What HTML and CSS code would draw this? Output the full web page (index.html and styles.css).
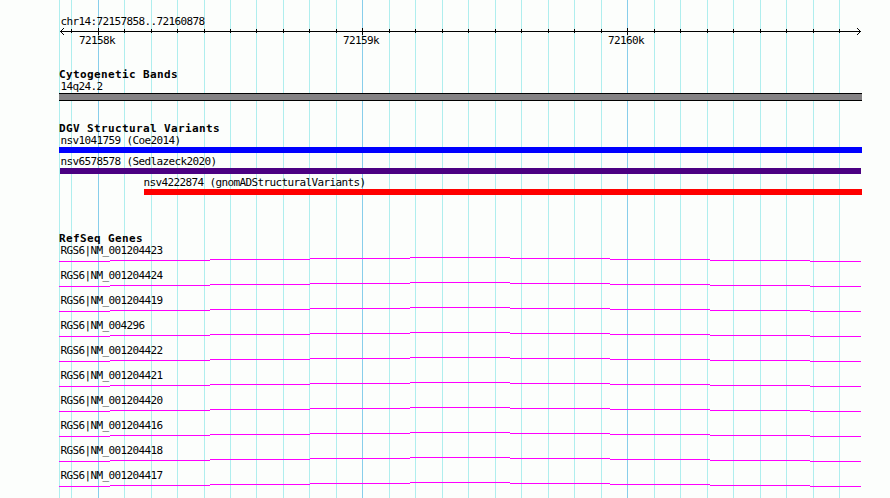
FILE: index.html
```html
<!DOCTYPE html>
<html lang="en">
<head>
    <meta charset="UTF-8">
    <title>chr14:72157858..72160878</title>
    <link rel="stylesheet" href="styles.css">
</head>
<body>
    <div class="browser">
        <svg class="grid" width="890" height="498">
            <path class="minor" d="M59 0v498M71 0v498M124 0v498M151 0v498M177 0v498M204 0v498M230 0v498M256 0v498M283 0v498M309 0v498M336 0v498M389 0v498M415 0v498M442 0v498M468 0v498M495 0v498M521 0v498M548 0v498M574 0v498M601 0v498M654 0v498M680 0v498M707 0v498M733 0v498M760 0v498M786 0v498M813 0v498M839 0v498" transform="translate(.5 0)"/>
            <path class="major" d="M98 0v498M362 0v498M627 0v498" transform="translate(.5 0)"/>
        </svg>

        <div class="tracks">
            <div class="ruler">
                <div class="label">chr14:72157858..72160878</div>
                <svg class="scale" width="803" height="6" viewBox="59 28 803 6">
                    <path d="M60 31.5H861"/>
                    <!-- minor ticks, then major ticks -->
                    <path d="M71 29v4M124 29v4M151 29v4M177 29v4M204 29v4M230 29v4M256 29v4M283 29v4M309 29v4M336 29v4M389 29v4M415 29v4M442 29v4M468 29v4M495 29v4M521 29v4M548 29v4M574 29v4M601 29v4M654 29v4M680 29v4M707 29v4M733 29v4M760 29v4M786 29v4M813 29v4M839 29v4" transform="translate(.5 0)"/>
                    <path d="M98 28v7M362 28v7M627 28v7" transform="translate(.5 0)"/>
                    <!-- arrow heads -->
                    <path d="M61 30.5h1M62 29.5h1M63 28.5h1M61 32.5h1M62 33.5h1M63 34.5h1"/>
                    <path d="M859 30.5h1M858 29.5h1M857 28.5h1M859 32.5h1M858 33.5h1M857 34.5h1"/>
                </svg>
                <div class="ticks">
                    <span>72158k</span>
                    <span>72159k</span>
                    <span>72160k</span>
                </div>
            </div>

            <div class="track">
                <h2>Cytogenetic Bands</h2>
                <div class="label">14q24.2</div>
                <div class="band"></div>
            </div>

            <div class="track variants">
                <h2>DGV Structural Variants</h2>
                <div class="variant">
                    <div class="label">nsv1041759 (Coe2014)</div>
                    <div class="bar blue"></div>
                </div>
                <div class="variant">
                    <div class="label">nsv6578578 (Sedlazeck2020)</div>
                    <div class="bar indigo"></div>
                </div>
                <div class="variant partial">
                    <div class="label">nsv4222874 (gnomADStructuralVariants)</div>
                    <div class="bar red"></div>
                </div>
            </div>

            <div class="track genes">
                <h2>RefSeq Genes</h2>
                <div class="gene">
                    <div class="label">RGS6|NM_001204423</div>
                    <svg class="intron" width="803" height="5">
                        <path id="intron" d="M0 4.5H51M51 3.5H151M151 2.5H251M251 1.5H351M351 .5H451M451 1.5H551M551 2.5H651M651 3.5H751M751 4.5H802"/>
                    </svg>
                </div>
                <div class="gene">
                    <div class="label">RGS6|NM_001204424</div>
                    <svg class="intron" width="803" height="5"><use href="#intron"/></svg>
                </div>
                <div class="gene">
                    <div class="label">RGS6|NM_001204419</div>
                    <svg class="intron" width="803" height="5"><use href="#intron"/></svg>
                </div>
                <div class="gene">
                    <div class="label">RGS6|NM_004296</div>
                    <svg class="intron" width="803" height="5"><use href="#intron"/></svg>
                </div>
                <div class="gene">
                    <div class="label">RGS6|NM_001204422</div>
                    <svg class="intron" width="803" height="5"><use href="#intron"/></svg>
                </div>
                <div class="gene">
                    <div class="label">RGS6|NM_001204421</div>
                    <svg class="intron" width="803" height="5"><use href="#intron"/></svg>
                </div>
                <div class="gene">
                    <div class="label">RGS6|NM_001204420</div>
                    <svg class="intron" width="803" height="5"><use href="#intron"/></svg>
                </div>
                <div class="gene">
                    <div class="label">RGS6|NM_001204416</div>
                    <svg class="intron" width="803" height="5"><use href="#intron"/></svg>
                </div>
                <div class="gene">
                    <div class="label">RGS6|NM_001204418</div>
                    <svg class="intron" width="803" height="5"><use href="#intron"/></svg>
                </div>
                <div class="gene">
                    <div class="label">RGS6|NM_001204417</div>
                    <svg class="intron" width="803" height="5"><use href="#intron"/></svg>
                </div>
            </div>
        </div>
    </div>
</body>
</html>
```

FILE: styles.css
```css
body {
    margin: 0;
    background-color: #fcfefc;
    color: #000;
    font-family: 'DejaVu Sans Mono', monospace;
    font-size: 11px;
    line-height: 13px;
    letter-spacing: -0.622px;
    overflow: hidden;
}

svg {
    display: block;
    fill: none;
    shape-rendering: crispEdges;
}

.browser {
    position: relative;
    width: 890px;
    height: 498px;
    overflow: hidden;
}

/* guide lines run behind every track */
.grid {
    position: absolute;
    top: 0;
    left: 0;
}

.minor {
    stroke: #afeeee;
}

.major {
    stroke: #87ceeb;
}

.tracks {
    position: relative;
    width: 803px;
    margin-left: 59px;
    padding-top: 15px;
}

.label {
    height: 13px;
    padding-left: 1.4px;
    white-space: nowrap;
}

.scale {
    overflow: visible;
    stroke: #000;
}

.ticks {
    display: flex;
    gap: 228px;
    padding-left: 20px;
}

.ticks span {
    width: 36px;
}

.ticks span:last-child {
    margin-left: 1px;
}

.track {
    margin-top: 21px;
}

.track h2 {
    height: 12px;
    margin: 0;
    font-size: 11px;
    line-height: 13px;
    letter-spacing: 0.378px;
}

.band {
    height: 6px;
    background-color: #848284;
    border-top: 1px solid #000;
    border-bottom: 1px solid #000;
}

.variant {
    margin-bottom: 2px;
}

.variant.partial {
    margin-left: 85px;
    margin-bottom: 0;
}

.partial .label {
    padding-left: 0;
    margin-left: -0.6px;
}

.bar {
    height: 6px;
}

.blue {
    background-color: #0000ff;
}

.indigo {
    margin: 0 1px;
    background-color: #4b0082;
}

.red {
    background-color: #ff0000;
}

.genes {
    margin-top: 37px;
}

.gene {
    height: 25px;
}

.intron {
    stroke: #ff00ff;
}
```
